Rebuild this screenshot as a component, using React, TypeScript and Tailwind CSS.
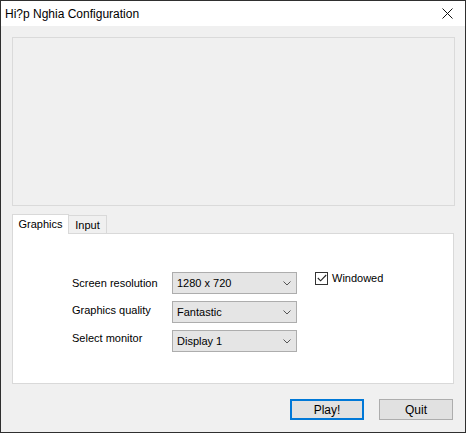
import React from "react";

const font = { fontFamily: '"Liberation Sans", Arial, sans-serif' };

function Chevron() {
  return (
    <svg width="8" height="5" viewBox="0 0 8 5" className="shrink-0">
      <path d="M0.5 0.5 L4 4 L7.5 0.5" fill="none" stroke="#555" strokeWidth="1" />
    </svg>
  );
}

function Select({ value }: { value: string }) {
  return (
    <div className="flex h-[22px] w-[125px] items-center justify-between border border-[#adadad] bg-[#e5e5e5] pl-[4px] pr-[5px] text-[11px] text-black">
      <span>{value}</span>
      <Chevron />
    </div>
  );
}

export default function App() {
  return (
    <div className="flex h-[433px] w-[466px] flex-col border border-[#2f2f2f] bg-[#f0f0f0]" style={font}>
      {/* title bar */}
      <div className="flex h-[25px] shrink-0 items-center justify-between bg-white pl-[4px] pr-[12px]">
        <span className="text-[12px] text-black">Hi?p Nghia Configuration</span>
        <svg width="11" height="11" viewBox="0 0 11 11">
          <path d="M0.5 0.5 L10.5 10.5 M10.5 0.5 L0.5 10.5" stroke="#111" strokeWidth="1" />
        </svg>
      </div>

      <div className="flex flex-col px-[11px] pt-[11px]">
        {/* banner area */}
        <div className="h-[169px] w-[443px] border border-[#dadada] bg-[#f0f0f0]" />

        {/* tabs */}
        <div className="mt-[7px] flex h-[20px] items-end">
          <div className="relative z-10 -mb-px flex h-[20px] w-[57px] items-start justify-center border border-b-0 border-[#d9d9d9] bg-white pt-[1px] text-[11px] text-black">
            Graphics
          </div>
          <div className="flex h-[18px] w-[38px] items-center justify-center border border-l-0 border-b-0 border-[#d9d9d9] bg-[#f0f0f0] pt-[1px] text-[11px] text-black">
            Input
          </div>
        </div>

        {/* tab content */}
        <div className="h-[151px] w-[442px] border border-[#d9d9d9] bg-white pl-[59px] pt-[38px]">
          <div className="flex flex-col gap-[7px] text-[11px] text-black">
            <div className="flex items-center">
              <span className="w-[100px]">Screen resolution</span>
              <Select value="1280 x 720" />
              <label className="ml-[18px] -mt-[2px] flex items-center gap-[4px] self-start">
                <span className="flex h-[13px] w-[13px] items-center justify-center border border-[#333] bg-white">
                  <svg width="10" height="8" viewBox="0 0 10 8">
                    <path d="M0.8 4 L3.6 6.8 L9.2 1" fill="none" stroke="#222" strokeWidth="1.1" />
                  </svg>
                </span>
                <span>Windowed</span>
              </label>
            </div>
            <div className="flex items-start">
              <span className="w-[100px] leading-[18px]">Graphics quality</span>
              <Select value="Fantastic" />
            </div>
            <div className="flex items-start">
              <span className="w-[100px] leading-[16px]">Select monitor</span>
              <Select value="Display 1" />
            </div>
          </div>
        </div>

        {/* buttons */}
        <div className="mt-[15px] flex justify-end gap-[15px] pr-[1px]">
          <button className="flex h-[21px] w-[74px] items-center justify-center border-2 border-[#0078d7] bg-[#e1e1e1] text-[12px] text-black">
            Play!
          </button>
          <button className="flex h-[21px] w-[74px] items-center justify-center border border-[#adadad] bg-[#e1e1e1] text-[12px] text-black">
            Quit
          </button>
        </div>
      </div>
    </div>
  );
}
